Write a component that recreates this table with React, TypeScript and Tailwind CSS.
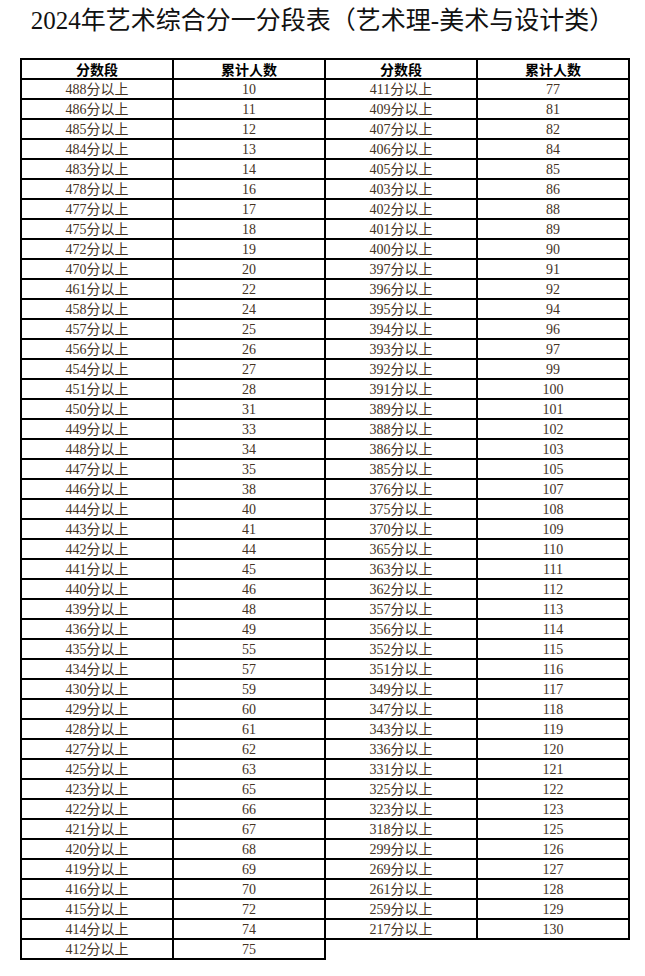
import React from 'react';

const leftRows: [string, number][] = [
  ['488', 10], ['486', 11], ['485', 12], ['484', 13], ['483', 14], ['478', 16],
  ['477', 17], ['475', 18], ['472', 19], ['470', 20], ['461', 22], ['458', 24],
  ['457', 25], ['456', 26], ['454', 27], ['451', 28], ['450', 31], ['449', 33],
  ['448', 34], ['447', 35], ['446', 38], ['444', 40], ['443', 41], ['442', 44],
  ['441', 45], ['440', 46], ['439', 48], ['436', 49], ['435', 55], ['434', 57],
  ['430', 59], ['429', 60], ['428', 61], ['427', 62], ['425', 63], ['423', 65],
  ['422', 66], ['421', 67], ['420', 68], ['419', 69], ['416', 70], ['415', 72],
  ['414', 74], ['412', 75],
];

const rightRows: [string, number][] = [
  ['411', 77], ['409', 81], ['407', 82], ['406', 84], ['405', 85], ['403', 86],
  ['402', 88], ['401', 89], ['400', 90], ['397', 91], ['396', 92], ['395', 94],
  ['394', 96], ['393', 97], ['392', 99], ['391', 100], ['389', 101], ['388', 102],
  ['386', 103], ['385', 105], ['376', 107], ['375', 108], ['370', 109], ['365', 110],
  ['363', 111], ['362', 112], ['357', 113], ['356', 114], ['352', 115], ['351', 116],
  ['349', 117], ['347', 118], ['343', 119], ['336', 120], ['331', 121], ['325', 122],
  ['323', 123], ['318', 125], ['299', 126], ['269', 127], ['261', 128], ['259', 129],
  ['217', 130],
];

const serif = "font-['Liberation_Serif','Noto_Sans_CJK_SC',serif]";
const head = "font-['Noto_Sans_CJK_SC',sans-serif]";

function Block({ rows, withLeft }: { rows: [string, number][]; withLeft: boolean }) {
  return (
    <div className={`grid grid-cols-[152px_152px] border-t-2 border-black ${withLeft ? 'border-l-2' : ''}`}>
      <div className={`h-5 border-r-2 border-b-2 border-black flex items-center justify-center text-[14px] font-bold text-black ${head}`}>
        分数段
      </div>
      <div className={`h-5 border-r-2 border-b-2 border-black flex items-center justify-center text-[14px] font-bold text-black ${head}`}>
        累计人数
      </div>
      {rows.map(([score, count]) => (
        <React.Fragment key={score}>
          <div className={`h-5 pt-px border-r-2 border-b-2 border-black flex items-center justify-center text-[14px] leading-none text-[#45331f] ${serif}`}>
            {score}分以上
          </div>
          <div className={`h-5 pt-px border-r-2 border-b-2 border-black flex items-center justify-center text-[14px] leading-none text-[#45331f] ${serif}`}>
            {count}
          </div>
        </React.Fragment>
      ))}
    </div>
  );
}

export default function App() {
  return (
    <div className="w-[645px] h-[976px] bg-white">
      <h1 className={`h-[58px] pt-[4px] text-center text-[25px] leading-[34px] font-normal text-[#111] ${serif}`}>
        2024年艺术综合分一分段表（艺术理-美术与设计类）
      </h1>
      <div className="flex items-start ml-5">
        <Block rows={leftRows} withLeft />
        <Block rows={rightRows} withLeft={false} />
      </div>
    </div>
  );
}
